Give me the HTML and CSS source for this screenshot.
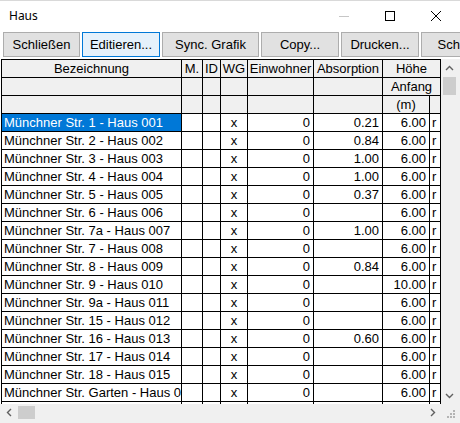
FILE: index.html
```html
<!DOCTYPE html>
<html lang="de">
<head>
<meta charset="utf-8">
<title>Haus</title>
<link rel="stylesheet" href="styles.css">
</head>
<body>
<div class="window">
  <div class="titlebar">
    <span class="title">Haus</span>
    <div class="caption">
      <span class="cap-btn">
        <svg width="12" height="12" viewBox="0 0 12 12"><path d="M1 6.5H11" stroke="#c6c6c6" stroke-width="1"/></svg>
      </span>
      <span class="cap-btn">
        <svg width="12" height="12" viewBox="0 0 12 12"><rect x="1.5" y="1.5" width="9" height="9" fill="none" stroke="#000" stroke-width="1"/></svg>
      </span>
      <span class="cap-btn">
        <svg width="12" height="12" viewBox="0 0 12 12"><path d="M1 1L11 11M11 1L1 11" stroke="#000" stroke-width="1"/></svg>
      </span>
    </div>
  </div>

  <div class="toolbar">
    <button class="btn w77">Schließen</button>
    <button class="btn w78 focused">Editieren...</button>
    <button class="btn w97">Sync. Grafik</button>
    <button class="btn w78">Copy...</button>
    <button class="btn w78">Drucken...</button>
    <button class="btn w91">Schließen</button>
  </div>

  <div class="client">
    <div class="viewport">
      <div class="grid">
        <div class="row head">
          <div class="c c1 ctr">Bezeichnung</div>
          <div class="c c2 ctr">M.</div>
          <div class="c c3 ctr">ID</div>
          <div class="c c4 ctr">WG</div>
          <div class="c c5 ctr">Einwohner</div>
          <div class="c c6 ctr">Absorption</div>
          <div class="c span2 ctr">Höhe</div>
        </div>
        <div class="row head">
          <div class="c c1"></div>
          <div class="c c2"></div>
          <div class="c c3"></div>
          <div class="c c4"></div>
          <div class="c c5"></div>
          <div class="c c6"></div>
          <div class="c span2 ctr">Anfang</div>
        </div>
        <div class="row head">
          <div class="c c1"></div>
          <div class="c c2"></div>
          <div class="c c3"></div>
          <div class="c c4"></div>
          <div class="c c5"></div>
          <div class="c c6"></div>
          <div class="c c7 ctr">(m)</div>
          <div class="c c8"></div>
        </div>

        <div class="row"><div class="c c1 sel">Münchner Str. 1 - Haus 001</div><div class="c c2"></div><div class="c c3"></div><div class="c c4 ctr">x</div><div class="c c5 num">0</div><div class="c c6 num">0.21</div><div class="c c7 num">6.00</div><div class="c c8">r</div></div>
        <div class="row"><div class="c c1">Münchner Str. 2 - Haus 002</div><div class="c c2"></div><div class="c c3"></div><div class="c c4 ctr">x</div><div class="c c5 num">0</div><div class="c c6 num">0.84</div><div class="c c7 num">6.00</div><div class="c c8">r</div></div>
        <div class="row"><div class="c c1">Münchner Str. 3 - Haus 003</div><div class="c c2"></div><div class="c c3"></div><div class="c c4 ctr">x</div><div class="c c5 num">0</div><div class="c c6 num">1.00</div><div class="c c7 num">6.00</div><div class="c c8">r</div></div>
        <div class="row"><div class="c c1">Münchner Str. 4 - Haus 004</div><div class="c c2"></div><div class="c c3"></div><div class="c c4 ctr">x</div><div class="c c5 num">0</div><div class="c c6 num">1.00</div><div class="c c7 num">6.00</div><div class="c c8">r</div></div>
        <div class="row"><div class="c c1">Münchner Str. 5 - Haus 005</div><div class="c c2"></div><div class="c c3"></div><div class="c c4 ctr">x</div><div class="c c5 num">0</div><div class="c c6 num">0.37</div><div class="c c7 num">6.00</div><div class="c c8">r</div></div>
        <div class="row"><div class="c c1">Münchner Str. 6 - Haus 006</div><div class="c c2"></div><div class="c c3"></div><div class="c c4 ctr">x</div><div class="c c5 num">0</div><div class="c c6 num"></div><div class="c c7 num">6.00</div><div class="c c8">r</div></div>
        <div class="row"><div class="c c1">Münchner Str. 7a - Haus 007</div><div class="c c2"></div><div class="c c3"></div><div class="c c4 ctr">x</div><div class="c c5 num">0</div><div class="c c6 num">1.00</div><div class="c c7 num">6.00</div><div class="c c8">r</div></div>
        <div class="row"><div class="c c1">Münchner Str. 7 - Haus 008</div><div class="c c2"></div><div class="c c3"></div><div class="c c4 ctr">x</div><div class="c c5 num">0</div><div class="c c6 num"></div><div class="c c7 num">6.00</div><div class="c c8">r</div></div>
        <div class="row"><div class="c c1">Münchner Str. 8 - Haus 009</div><div class="c c2"></div><div class="c c3"></div><div class="c c4 ctr">x</div><div class="c c5 num">0</div><div class="c c6 num">0.84</div><div class="c c7 num">6.00</div><div class="c c8">r</div></div>
        <div class="row"><div class="c c1">Münchner Str. 9 - Haus 010</div><div class="c c2"></div><div class="c c3"></div><div class="c c4 ctr">x</div><div class="c c5 num">0</div><div class="c c6 num"></div><div class="c c7 num">10.00</div><div class="c c8">r</div></div>
        <div class="row"><div class="c c1">Münchner Str. 9a - Haus 011</div><div class="c c2"></div><div class="c c3"></div><div class="c c4 ctr">x</div><div class="c c5 num">0</div><div class="c c6 num"></div><div class="c c7 num">6.00</div><div class="c c8">r</div></div>
        <div class="row"><div class="c c1">Münchner Str. 15 - Haus 012</div><div class="c c2"></div><div class="c c3"></div><div class="c c4 ctr">x</div><div class="c c5 num">0</div><div class="c c6 num"></div><div class="c c7 num">6.00</div><div class="c c8">r</div></div>
        <div class="row"><div class="c c1">Münchner Str. 16 - Haus 013</div><div class="c c2"></div><div class="c c3"></div><div class="c c4 ctr">x</div><div class="c c5 num">0</div><div class="c c6 num">0.60</div><div class="c c7 num">6.00</div><div class="c c8">r</div></div>
        <div class="row"><div class="c c1">Münchner Str. 17 - Haus 014</div><div class="c c2"></div><div class="c c3"></div><div class="c c4 ctr">x</div><div class="c c5 num">0</div><div class="c c6 num"></div><div class="c c7 num">6.00</div><div class="c c8">r</div></div>
        <div class="row"><div class="c c1">Münchner Str. 18 - Haus 015</div><div class="c c2"></div><div class="c c3"></div><div class="c c4 ctr">x</div><div class="c c5 num">0</div><div class="c c6 num"></div><div class="c c7 num">6.00</div><div class="c c8">r</div></div>
        <div class="row"><div class="c c1">Münchner Str. Garten - Haus 016</div><div class="c c2"></div><div class="c c3"></div><div class="c c4 ctr">x</div><div class="c c5 num">0</div><div class="c c6 num"></div><div class="c c7 num">6.00</div><div class="c c8">r</div></div>
        <div class="row"><div class="c c1">Grundstück Garten - Haus 017</div><div class="c c2"></div><div class="c c3"></div><div class="c c4 ctr">x</div><div class="c c5 num">0</div><div class="c c6 num"></div><div class="c c7 num">6.00</div><div class="c c8">r</div></div>
      </div>
    </div>

    <div class="vscroll">
      <span class="arrow">
        <svg width="9" height="6" viewBox="0 0 9 6"><path d="M1 5L4.5 1.5L8 5" fill="none" stroke="#606060" stroke-width="1.4"/></svg>
      </span>
      <div class="vtrack"><div class="vthumb"></div></div>
      <span class="arrow">
        <svg width="9" height="6" viewBox="0 0 9 6"><path d="M1 1L4.5 4.5L8 1" fill="none" stroke="#606060" stroke-width="1.4"/></svg>
      </span>
    </div>

    <div class="hscroll">
      <span class="arrow">
        <svg width="6" height="9" viewBox="0 0 6 9"><path d="M5 1L1.5 4.5L5 8" fill="none" stroke="#606060" stroke-width="1.4"/></svg>
      </span>
      <div class="htrack"><div class="hthumb"></div></div>
      <span class="arrow">
        <svg width="6" height="9" viewBox="0 0 6 9"><path d="M1 1L4.5 4.5L1 8" fill="none" stroke="#606060" stroke-width="1.4"/></svg>
      </span>
    </div>

    <div class="corner">
      <svg width="17" height="17" viewBox="0 0 17 17">
        <g fill="#b4b4b4">
          <rect x="12" y="12" width="2" height="2"/>
          <rect x="9" y="12" width="2" height="2"/>
          <rect x="6" y="12" width="2" height="2"/>
          <rect x="12" y="9" width="2" height="2"/>
          <rect x="9" y="9" width="2" height="2"/>
          <rect x="12" y="6" width="2" height="2"/>
        </g>
      </svg>
    </div>
  </div>
</div>
</body>
</html>
```

FILE: styles.css
```css
* {
  box-sizing: border-box;
}

html, body {
  margin: 0;
  padding: 0;
  background: #f0f0f0;
}

.window {
  width: 460px;
  height: 423px;
  overflow: hidden;
  background: #f0f0f0;
  border-top: 1px solid #d9d9d9;
  font-family: "Liberation Sans", Arial, sans-serif;
  font-size: 13px;
  color: #000;
}

/* title bar */
.titlebar {
  height: 30px;
  background: #fff;
  display: flex;
  align-items: center;
  justify-content: space-between;
}

.title {
  padding-left: 9px;
  font-family: "Segoe UI", "Noto Sans", sans-serif;
  font-size: 12px;
  padding-bottom: 2px;
}

.caption {
  display: flex;
  height: 100%;
  padding-right: 18px;
  gap: 34px;
  align-items: center;
}

.cap-btn {
  display: flex;
  width: 12px;
  height: 12px;
}

/* button row */
.toolbar {
  display: flex;
  gap: 2px;
  padding: 1px 0 1px 3px;
  height: 28px;
  background: #fff;
  overflow: hidden;
}

.btn {
  flex: none;
  height: 25px;
  background: #e1e1e1;
  border: 1px solid #adadad;
  font-family: "Liberation Sans", Arial, sans-serif;
  font-size: 13px;
  color: #000;
  padding: 0;
  white-space: nowrap;
  overflow: hidden;
}

.btn.focused {
  background: #e5f1fb;
  border-color: #0078d7;
}

.w77 { width: 77px; }
.w78 { width: 78px; }
.w91 { width: 91px; }
.w97 { width: 97px; }

/* grid and scrollbars */
.client {
  display: grid;
  grid-template-columns: 441px 17px;
  grid-template-rows: 345px 17px;
}

.viewport {
  overflow: hidden;
  background: #fff;
}

.grid {
  width: 441px;
  border-top: 1px solid #000;
  border-left: 1px solid #000;
  margin-left: 1px;
}

.row {
  display: grid;
  grid-template-columns: 180px 21px 18px 27px 66px 69px 47px 11px;
  height: 18px;
}

.c {
  height: 18px;
  line-height: 17px;
  border-right: 1px solid #000;
  border-bottom: 1px solid #000;
  background: #fff;
  white-space: nowrap;
  overflow: hidden;
  padding: 0 2px;
}

.head .c {
  background: #f0f0f0;
}

.span2 {
  grid-column: span 2;
}

.ctr {
  text-align: center;
  padding: 0;
}

.num {
  text-align: right;
  padding-right: 3px;
}

.c8 {
  padding: 0 0 0 2px;
}

.sel {
  background: #0078d7 !important;
  color: #fff;
}

.vscroll {
  background: #f0f0f0;
  display: flex;
  flex-direction: column;
}

.vscroll .arrow {
  height: 17px;
  display: flex;
  align-items: center;
  justify-content: center;
  flex: none;
}

.vtrack {
  flex: 1;
  padding: 1px 2px;
}

.vthumb {
  height: 18px;
  background: #cdcdcd;
}

.hscroll {
  background: #f0f0f0;
  display: flex;
}

.hscroll .arrow {
  width: 17px;
  display: flex;
  align-items: center;
  justify-content: center;
  flex: none;
}

.htrack {
  flex: 1;
  padding: 2px 1px;
}

.hthumb {
  width: 17px;
  height: 100%;
  background: #cdcdcd;
}

.corner {
  background: #f0f0f0;
}
```
